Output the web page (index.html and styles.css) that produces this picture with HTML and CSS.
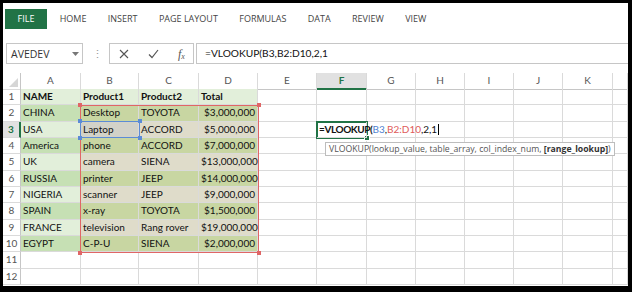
FILE: index.html
```html
<!DOCTYPE html>
<html lang="en">
<head>
    <meta charset="UTF-8">
    <title>VLOOKUP</title>
    <link rel="stylesheet" href="styles.css">
</head>
<body>
<div class="frame">
    <div class="tabs">
        <span class="tab file">FILE</span>
        <span class="tab">HOME</span>
        <span class="tab">INSERT</span>
        <span class="tab">PAGE LAYOUT</span>
        <span class="tab">FORMULAS</span>
        <span class="tab">DATA</span>
        <span class="tab">REVIEW</span>
        <span class="tab">VIEW</span>
    </div>

    <div class="formula-bar">
        <div class="namebox">
            <span>AVEDEV</span>
            <svg width="7" height="4" viewBox="0 0 7 4"><path d="M0 0h7L3.5 4z" fill="#777"/></svg>
        </div>
        <span class="dots">⋮</span>
        <div class="buttons">
            <svg width="10" height="10" viewBox="0 0 10 10"><path d="M1 1l8 8M9 1l-8 8" stroke="#555" stroke-width="1.1"/></svg>
            <svg width="11" height="10" viewBox="0 0 11 10"><path d="M1 5.5l3 3L10 1" stroke="#555" stroke-width="1.2" fill="none"/></svg>
            <span class="fx">f<span class="x">x</span></span>
        </div>
        <div class="input">=VLOOKUP(B3,B2:D10,2,1</div>
    </div>

    <div class="sheet">
        <div class="row head">
            <div class="rh corner"><svg width="9" height="9" viewBox="0 0 9 9"><path d="M9 0v9H0z" fill="#d6d6d6"/></svg></div>
            <div class="c">A</div><div class="c">B</div><div class="c">C</div><div class="c">D</div>
            <div class="c">E</div><div class="c sel">F</div><div class="c">G</div><div class="c">H</div>
            <div class="c">I</div><div class="c">J</div><div class="c">K</div><div class="c"></div>
        </div>
        <div class="row">
            <div class="rh">1</div>
            <div class="c hd">NAME</div><div class="c hd">Product1</div><div class="c hd">Product2</div><div class="c hd">Total</div>
            <div class="c"></div><div class="c"></div><div class="c"></div><div class="c"></div><div class="c"></div><div class="c"></div><div class="c"></div><div class="c"></div>
        </div>
        <div class="row">
            <div class="rh">2</div>
            <div class="c ga">CHINA</div><div class="c ol">Desktop</div><div class="c ol">TOYOTA</div><div class="c ol num">$3,000,000</div>
            <div class="c"></div><div class="c"></div><div class="c"></div><div class="c"></div><div class="c"></div><div class="c"></div><div class="c"></div><div class="c"></div>
        </div>
        <div class="row">
            <div class="rh sel">3</div>
            <div class="c gb">USA</div><div class="c ref">Laptop</div><div class="c tn">ACCORD</div><div class="c tn num">$5,000,000</div>
            <div class="c"></div>
            <div class="c edit"><span class="k">=VLOOKUP(</span><span class="blue">B3</span>,<span class="red">B2:D10</span>,2,1<i class="caret"></i></div>
            <div class="c"></div><div class="c"></div><div class="c"></div><div class="c"></div><div class="c"></div><div class="c"></div>
        </div>
        <div class="row">
            <div class="rh">4</div>
            <div class="c ga">America</div><div class="c ol">phone</div><div class="c ol">ACCORD</div><div class="c ol num">$7,000,000</div>
            <div class="c"></div><div class="c"></div><div class="c"></div><div class="c"></div><div class="c"></div><div class="c"></div><div class="c"></div><div class="c"></div>
        </div>
        <div class="row">
            <div class="rh">5</div>
            <div class="c gb">UK</div><div class="c tn">camera</div><div class="c tn">SIENA</div><div class="c tn num">$13,000,000</div>
            <div class="c"></div><div class="c"></div><div class="c"></div><div class="c"></div><div class="c"></div><div class="c"></div><div class="c"></div><div class="c"></div>
        </div>
        <div class="row">
            <div class="rh">6</div>
            <div class="c ga">RUSSIA</div><div class="c ol">printer</div><div class="c ol">JEEP</div><div class="c ol num">$14,000,000</div>
            <div class="c"></div><div class="c"></div><div class="c"></div><div class="c"></div><div class="c"></div><div class="c"></div><div class="c"></div><div class="c"></div>
        </div>
        <div class="row">
            <div class="rh">7</div>
            <div class="c gb">NIGERIA</div><div class="c tn">scanner</div><div class="c tn">JEEP</div><div class="c tn num">$9,000,000</div>
            <div class="c"></div><div class="c"></div><div class="c"></div><div class="c"></div><div class="c"></div><div class="c"></div><div class="c"></div><div class="c"></div>
        </div>
        <div class="row">
            <div class="rh">8</div>
            <div class="c ga">SPAIN</div><div class="c ol">x-ray</div><div class="c ol">TOYOTA</div><div class="c ol num">$1,500,000</div>
            <div class="c"></div><div class="c"></div><div class="c"></div><div class="c"></div><div class="c"></div><div class="c"></div><div class="c"></div><div class="c"></div>
        </div>
        <div class="row">
            <div class="rh">9</div>
            <div class="c gb">FRANCE</div><div class="c tn">television</div><div class="c tn">Rang rover</div><div class="c tn num">$19,000,000</div>
            <div class="c"></div><div class="c"></div><div class="c"></div><div class="c"></div><div class="c"></div><div class="c"></div><div class="c"></div><div class="c"></div>
        </div>
        <div class="row">
            <div class="rh">10</div>
            <div class="c ga">EGYPT</div><div class="c ol">C-P-U</div><div class="c ol">SIENA</div><div class="c ol num">$2,000,000</div>
            <div class="c"></div><div class="c"></div><div class="c"></div><div class="c"></div><div class="c"></div><div class="c"></div><div class="c"></div><div class="c"></div>
        </div>
        <div class="row">
            <div class="rh">11</div>
            <div class="c"></div><div class="c"></div><div class="c"></div><div class="c"></div>
            <div class="c"></div><div class="c"></div><div class="c"></div><div class="c"></div><div class="c"></div><div class="c"></div><div class="c"></div><div class="c"></div>
        </div>
        <div class="row">
            <div class="rh">12</div>
            <div class="c"></div><div class="c"></div><div class="c"></div><div class="c"></div>
            <div class="c"></div><div class="c"></div><div class="c"></div><div class="c"></div><div class="c"></div><div class="c"></div><div class="c"></div><div class="c"></div>
        </div>

        <!-- reference boxes and the active cell sit over the grid -->
        <div class="range red-range">
            <i class="h tl"></i><i class="h tr"></i><i class="h bl"></i><i class="h br"></i>
        </div>
        <div class="range blue-range">
            <i class="h tl"></i><i class="h tr"></i><i class="h bl"></i><i class="h br"></i>
        </div>
        <div class="active"><i class="fill"></i></div>
        <div class="tip">VLOOKUP(lookup_value, table_array, col_index_num, <b>[range_lookup]</b>)</div>
    </div>
</div>
</body>
</html>
```

FILE: styles.css
```css
body {
    margin: 0;
    background: #fff;
}

.frame {
    width: 632px;
    height: 292px;
    box-sizing: border-box;
    border-style: solid;
    border-color: #000;
    border-width: 3px 4px 6px 3px;
    background: #fff;
    overflow: hidden;
    font-family: "Open Sans", sans-serif;
}

/* ribbon tabs */
.tabs {
    display: flex;
    align-items: center;
    height: 20px;
    padding: 6px 0 0 2px;
}

.tab {
    padding: 0 10.7px;
    font-size: 9px;
    color: #444;
    line-height: 20px;
}

.tab.file {
    width: 42px;
    padding: 0;
    margin-right: 2px;
    text-align: center;
    background: #217346;
    color: #fff;
}

/* formula bar */
.formula-bar {
    display: flex;
    align-items: center;
    height: 21px;
    margin-top: 14px;
}

.namebox {
    display: flex;
    align-items: center;
    justify-content: space-between;
    box-sizing: border-box;
    width: 77px;
    height: 21px;
    margin-left: 3px;
    padding: 0 3px 0 4px;
    border: 1px solid #c6c6c6;
    font-size: 10.5px;
    color: #333;
}

.dots {
    width: 24px;
    padding-left: 2px;
    text-align: center;
    font-size: 11px;
    color: #999;
}

.buttons {
    display: flex;
    align-items: center;
    gap: 19px;
    box-sizing: border-box;
    width: 85px;
    height: 21px;
    padding: 0 0 0 9px;
    border: 1px solid #c6c6c6;
}

.fx {
    display: flex;
    align-items: flex-end;
    height: 12px;
    font-family: "Liberation Serif", serif;
    font-style: italic;
    font-size: 12px;
    line-height: 12px;
    color: #555;
}

.fx .x {
    font-size: 8px;
    line-height: 8px;
    margin-bottom: -1px;
}

.input {
    flex: 1;
    box-sizing: border-box;
    height: 21px;
    margin-left: 2px;
    padding-left: 8px;
    border: 1px solid #c6c6c6;
    border-right: none;
    font-family: Lato, sans-serif;
    font-size: 10.2px;
    line-height: 19px;
    color: #111;
}

/* worksheet */
.sheet {
    position: relative;
    margin-top: 9px;
    font-family: Lato, sans-serif;
}

.row {
    display: grid;
    grid-template-columns: 18px 60px 58px 60px 59px 59px 50px 49px 49px 49px 49px 50px 1fr;
    height: 16.33px;
}

.row.head {
    height: 16px;
}

.c, .rh {
    box-sizing: border-box;
    border-right: 1px solid #dadada;
    border-bottom: 1px solid #dadada;
    font-size: 10px;
    line-height: 15px;
    padding: 0 2px;
    white-space: nowrap;
    color: #111;
}

.rh {
    text-align: center;
    color: #555;
    border-right-color: #c6c6c6;
    padding: 0;
}

.head .c {
    text-align: center;
    color: #555;
    border-bottom-color: #c6c6c6;
}

.corner {
    display: flex;
    align-items: flex-end;
    justify-content: flex-end;
    padding: 0 2px 2px 0;
}

.head .c.sel {
    background: #e1e1e1;
    color: #217346;
    font-weight: bold;
    border-bottom: 2px solid #217346;
}

.rh.sel {
    background: #e1e1e1;
    color: #217346;
    font-weight: bold;
    border-right: 2px solid #217346;
}

.hd {
    background: #e2efda;
    font-weight: bold;
}

.ga { background: #c6e0b4; }
.gb { background: #e2efda; }
.ol { background: #c8d6a2; }
.tn { background: #dfdcca; }
.ref { background: #d2d2c8; }

.num {
    text-align: right;
}

.edit {
    position: relative;
    z-index: 2;
    overflow: visible;
    padding-left: 2px;
}

.edit .k {
    font-weight: bold;
    letter-spacing: -0.4px;
}

.blue { color: #4f81d0; }
.red { color: #e05a5a; }

.caret {
    display: inline-block;
    width: 1px;
    height: 11px;
    margin-left: 1px;
    vertical-align: -2px;
    background: #000;
}

.range {
    position: absolute;
    box-sizing: border-box;
}

.red-range {
    left: 77px;
    top: 31.5px;
    width: 179px;
    height: 148px;
    border: 1px solid #e06666;
}

.blue-range {
    left: 77px;
    top: 48px;
    width: 60px;
    height: 17px;
    border: 1px solid #5b8bd6;
}

.h {
    position: absolute;
    width: 4px;
    height: 4px;
}

.red-range .h { background: #e06666; }
.blue-range .h { background: #5b8bd6; }

.tl { left: -3px; top: -3px; }
.tr { right: -3px; top: -3px; }
.bl { left: -3px; bottom: -3px; }
.br { right: -3px; bottom: -3px; }

.active {
    position: absolute;
    left: 313px;
    top: 47.5px;
    width: 52px;
    height: 18px;
    box-sizing: border-box;
    border: 2px solid #217346;
    z-index: 1;
}

.fill {
    position: absolute;
    right: -4px;
    bottom: -4px;
    width: 4px;
    height: 4px;
    background: #217346;
    border: 1px solid #fff;
}

.tip {
    position: absolute;
    left: 322px;
    top: 68.5px;
    z-index: 3;
    box-sizing: border-box;
    height: 14px;
    padding: 0 3px;
    border: 1px solid #bdbdbd;
    background: #fff;
    font-family: "Open Sans", sans-serif;
    font-size: 8.7px;
    line-height: 12px;
    color: #555;
    white-space: nowrap;
}

.tip b {
    color: #333;
}
```
